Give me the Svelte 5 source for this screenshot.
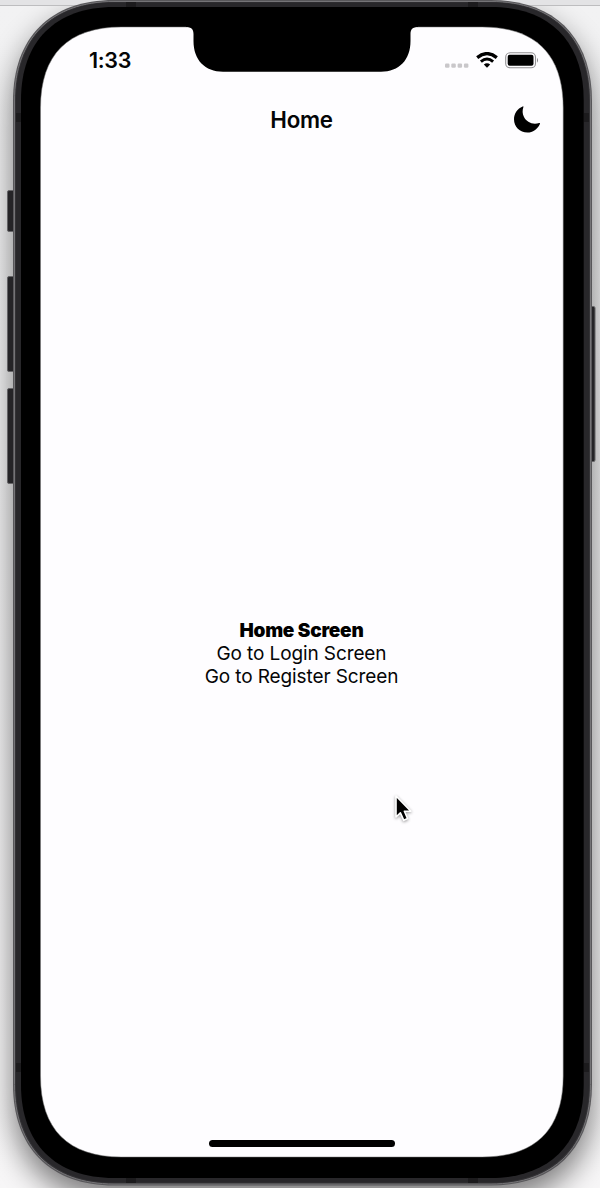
<script>
  function corners(l, t, r, b, e, c) {
    const i = e * c;
    return `M${l + e} ${t}H${r - e}C${r - i} ${t} ${r} ${t + i} ${r} ${t + e}V${b - e}C${r} ${b - i} ${r - i} ${b} ${r - e} ${b}H${l + e}C${l + i} ${b} ${l} ${b - i} ${l} ${b - e}V${t + e}C${l} ${t + i} ${l + i} ${t} ${l + e} ${t}Z`;
  }
  const body = corners(13, 0, 592, 1185.5, 101, 0.37);
  const rim = corners(14.5, 1.5, 590.5, 1184, 99.5, 0.37);
  const band = corners(16, 2.5, 589, 1182.5, 98, 0.37);
  const bezel = corners(21, 7, 583.7, 1178, 93, 0.37);
  const glass = corners(40.5, 27, 563.2, 1157, 81, 0.34);
  const links = ['Go to Login Screen', 'Go to Register Screen'];
</script>

<div class="stage">
  <svg class="device" viewBox="0 0 600 1188" aria-hidden="true">
    <defs>
      <filter id="soft" x="-20%" y="-10%" width="140%" height="120%"><feGaussianBlur stdDeviation="15" /></filter>
      <linearGradient id="tint" x1="0" y1="0" x2="0" y2="1">
        <stop offset="0" stop-color="#f2f2f3" /><stop offset=".35" stop-color="#f0f0f1" /><stop offset="1" stop-color="#f7f6f7" />
      </linearGradient>
    </defs>
    <rect width="600" height="1188" fill="url(#tint)" />
    <path d={body} fill="#000" opacity=".5" filter="url(#soft)" transform="translate(0 14)" />
    <rect width="600" height="5" fill="#e3e3e5" />
    <rect y="5" width="600" height="1" fill="#bdbdbf" />
    <g fill="#252427" stroke="#656467" stroke-width="1">
      <rect x="7.5" y="190.5" width="8" height="41" rx="1.5" />
      <rect x="7.5" y="276.5" width="8" height="95" rx="1.5" />
      <rect x="7.5" y="388.5" width="8" height="95" rx="1.5" />
      <rect x="588" y="306.5" width="7" height="155" rx="1.5" />
    </g>
    <path d={body} fill="#58575a" />
    <path d={rim} fill="#333235" stroke="#757477" stroke-width="1" />
    <path d={band} fill="#28272a" />
    <g fill="#1c1b1d">
      <rect x="16" y="113" width="5" height="9" /><rect x="584" y="113" width="5" height="9" />
      <rect x="16" y="1063" width="5" height="9" /><rect x="584" y="1063" width="5" height="9" />
      <rect x="126" y="2" width="10" height="5" /><rect x="468" y="2" width="10" height="5" />
      <rect x="126" y="1178" width="10" height="5" /><rect x="468" y="1178" width="10" height="5" />
    </g>
    <path d={bezel} fill="#000" />
    <path d={glass} fill="#fefdff" stroke="#777" stroke-width=".5" />
    <path d="M186 26H418V27C412.5 27 410.5 29.5 410.5 34V41C410.5 60 399 71.7 381 71.7H223C205 71.7 193.5 60 193.5 41V34C193.5 29.5 191.5 27 186 27Z" fill="#000" />
  </svg>

  <main class="screen">
    <div class="status">
      <span class="time">1:33</span>
      <div class="indicators">
        <svg class="signal" width="24" height="5" viewBox="0 0 24 5">
          <g fill="#c9c7ca"><rect x="0" y=".5" width="4.5" height="4.2" rx="1.2" /><rect x="6.3" y=".5" width="4.5" height="4.2" rx="1.2" /><rect x="12.6" y=".5" width="4.5" height="4.2" rx="1.2" /><rect x="18.9" y=".5" width="4.5" height="4.2" rx="1.2" /></g>
        </svg>
        <svg class="wifi" width="22" height="16" viewBox="0 0 22 16">
          <path d="M1.2 5.6Q11-2.4 20.8 5.6" fill="none" stroke="#000" stroke-width="3.3" />
          <path d="M4.9 9.6Q11 4.5 17.1 9.6" fill="none" stroke="#000" stroke-width="3" />
          <path d="M7.8 12.5Q11 9.8 14.2 12.5L11 15.7Z" />
        </svg>
        <svg class="battery" width="34" height="17" viewBox="0 0 34 17">
          <rect x=".7" y=".8" width="29.8" height="15" rx="4.4" fill="none" stroke="#929194" stroke-width="1.1" />
          <rect x="2.7" y="2.8" width="25.8" height="11" rx="2" />
          <path d="M32 5.8Q34 8.3 32 10.8Z" fill="#858487" />
        </svg>
      </div>
    </div>
    <header>
      <h1>Home</h1>
      <svg class="moon" width="27" height="27" viewBox="0 0 27 27" aria-label="Dark mode">
        <path d="M8.7.4C9.3.1 9.6.5 9.4 1C8.3 4.2 8.3 7.7 10 11.1C12.5 16.2 18.8 19.2 25.1 17.1C25.8 16.9 26.2 17.3 25.9 17.9C23.5 23.2 18.7 26.5 13.5 26.5C5.8 26.5 0 20.7 0 13.2C0 7.4 3.4 2.6 8.7.4Z" />
      </svg>
    </header>
    <section>
      <h2>Home Screen</h2>
      {#each links as label}<div class="link">{label}</div>{/each}
    </section>
    <footer><div class="indicator"></div></footer>
  </main>

  <svg class="cursor" width="24" height="33" viewBox="0 0 24 33" aria-hidden="true">
    <path d="M3 2V23L7.4 18.8L10.8 26.3L14.6 24.6L11.4 17.3H17.8Z" fill="#000" stroke="#fff" stroke-width="1.6" stroke-linejoin="round" />
  </svg>
</div>

<style>
  :global(body) { margin: 0; }
  .stage { position: relative; width: 600px; height: 1188px; overflow: hidden; font-family: Inter, sans-serif; color: #050506; }
  svg { display: block; flex: none; }
  .device { position: absolute; inset: 0; width: 600px; height: 1188px; }
  .screen { position: relative; box-sizing: border-box; width: 523px; height: 1157px; margin-left: 40px; padding-top: 27px; display: flex; flex-direction: column; }
  .status { height: 65px; box-sizing: border-box; padding: 0 24px 0 49px; display: flex; align-items: center; justify-content: space-between; }
  .time { font-size: 21.5px; font-weight: 600; line-height: 26px; letter-spacing: -.3px; }
  .indicators { display: flex; align-items: center; gap: 7px; }
  .signal { margin-top: 12px; }
  .battery { margin-top: 2px; }
  header { height: 54px; display: grid; grid-template-columns: 50px 1fr 50px; align-items: center; }
  h1 { grid-column: 2; margin: 2px 0 0; text-align: center; font-size: 22.3px; line-height: 28px; font-weight: 600; letter-spacing: -.25px; }
  .moon { justify-self: end; margin-right: 22px; }
  section { flex: 1; padding-top: 24px; display: flex; flex-direction: column; align-items: center; justify-content: center; font-size: 19px; line-height: 23px; }
  h2 { margin: 0; font-size: 19px; line-height: 23px; font-weight: 900; letter-spacing: -.22px; color: #000; }
  .link { letter-spacing: -.11px; }
  footer { height: 21px; display: flex; justify-content: center; align-items: flex-start; }
  .indicator { width: 186px; height: 7px; margin-top: 4px; border-radius: 4px; background: #000; }
  .cursor { position: absolute; left: 393px; top: 794px; filter: drop-shadow(0 1px 1.5px #0006); }
</style>
